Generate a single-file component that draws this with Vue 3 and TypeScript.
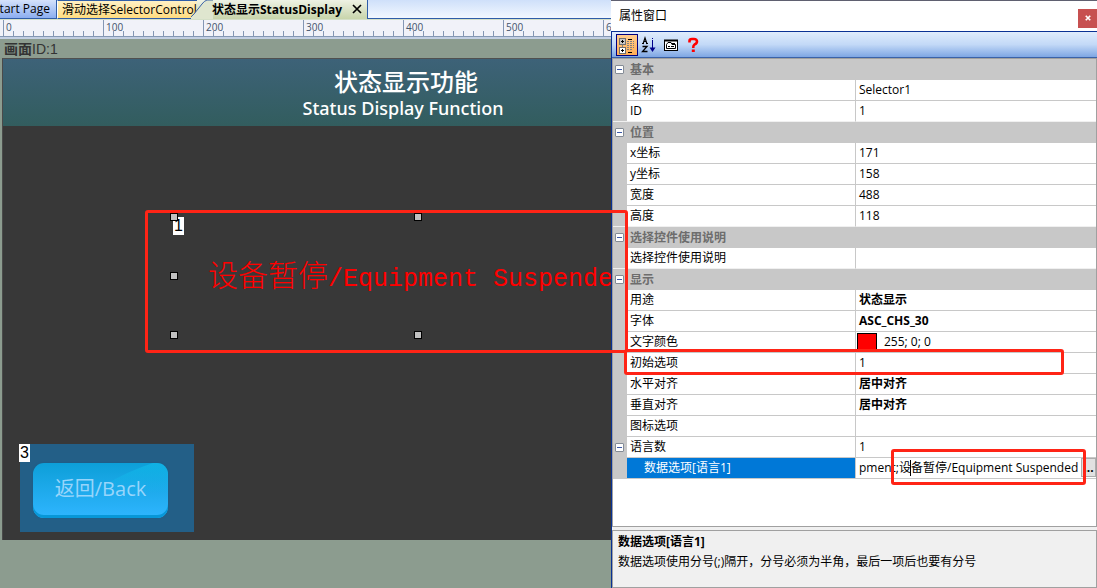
<script setup lang="ts">
import { ref } from 'vue'

interface Row {
  kind: 'category' | 'prop'
  label: string
  value?: string
  bold?: boolean
  swatch?: boolean
  toggle?: boolean
  editing?: boolean
  last?: boolean
}

const rows: Row[] = [
  { kind: 'category', label: '基本' },
  { kind: 'prop', label: '名称', value: 'Selector1' },
  { kind: 'prop', label: 'ID', value: '1', last: true },
  { kind: 'category', label: '位置' },
  { kind: 'prop', label: 'x坐标', value: '171' },
  { kind: 'prop', label: 'y坐标', value: '158' },
  { kind: 'prop', label: '宽度', value: '488' },
  { kind: 'prop', label: '高度', value: '118', last: true },
  { kind: 'category', label: '选择控件使用说明' },
  { kind: 'prop', label: '选择控件使用说明', value: '', last: true },
  { kind: 'category', label: '显示' },
  { kind: 'prop', label: '用途', value: '状态显示', bold: true },
  { kind: 'prop', label: '字体', value: 'ASC_CHS_30', bold: true },
  { kind: 'prop', label: '文字颜色', value: '255; 0; 0', swatch: true },
  { kind: 'prop', label: '初始选项', value: '1' },
  { kind: 'prop', label: '水平对齐', value: '居中对齐', bold: true },
  { kind: 'prop', label: '垂直对齐', value: '居中对齐', bold: true },
  { kind: 'prop', label: '图标选项', value: '' },
  { kind: 'prop', label: '语言数', value: '1', toggle: true },
  { kind: 'prop', label: '数据选项[语言1]', editing: true },
]

const options = ref('pment;设备暂停/Equipment Suspended')
const marks = [0, 100, 200, 300, 400, 500, 600]
const handles = ['nw', 'n', 'w', 'sw', 's']
</script>

<template>
  <div class="app">
    <main class="editor">
      <nav class="tabs">
        <button class="tab start" type="button"><span>Start Page</span></button>
        <button class="tab selector" type="button">滑动选择SelectorControl</button>
        <div class="tab active">
          <svg class="slant" viewBox="0 0 22 20" width="22" height="20" aria-hidden="true">
            <path d="M22 0H16Q13 1 11 4L3 14Q0 18 -4 19V20H22Z" fill="#dfe6cf" />
            <path d="M22 0H16Q13 1 11 4L3 14Q0 18 -4 18.500" fill="none" stroke="#3a62a8" />
          </svg>
          <button class="name" type="button">状态显示StatusDisplay</button>
          <button class="tab-close" type="button" aria-label="关闭标签">
            <svg viewBox="0 0 10 10" width="10" height="10"><path d="M1 1L9 9M9 1L1 9" stroke="#000" stroke-width="1.700" /></svg>
          </button>
        </div>
      </nav>
      <div class="ruler">
        <div v-for="m in marks" :key="m" class="mark">{{ m }}</div>
      </div>
      <section class="workspace">
        <div class="screen-id"><b>画面</b>ID:1</div>
        <div class="screen">
          <header class="banner">
            <h1>状态显示功能</h1>
            <p>Status Display Function</p>
          </header>
          <div class="control">
            <span class="badge">1</span>
            <span class="status"><span class="cjk">设备暂停</span>/Equipment Suspended</span>
            <i v-for="h in handles" :key="h" class="handle" :class="h"></i>
          </div>
          <div class="back-area">
            <span class="badge">3</span>
            <button class="back" type="button">
              <svg class="gloss" viewBox="0 0 135 52" preserveAspectRatio="none" aria-hidden="true">
                <path d="M70 23Q95 8 120 0H135V52H60Z" fill="url(#shine)" />
                <defs>
                  <linearGradient id="shine" x1="0" y1="0" x2="0" y2="1">
                    <stop offset="0" stop-color="#12c4f0" stop-opacity=".5" />
                    <stop offset="0.600" stop-color="#12c4f0" stop-opacity="0" />
                  </linearGradient>
                </defs>
              </svg>
              <span>返回/Back</span>
            </button>
          </div>
        </div>
      </section>
    </main>

    <aside class="panel">
      <div class="panel-title">
        <h2>属性窗口</h2>
        <button class="close" type="button" aria-label="关闭">
          <svg viewBox="0 0 8 8" width="6" height="6"><path d="M1 1L7 7M7 1L1 7" stroke="#fff" stroke-width="2.200" /></svg>
        </button>
      </div>
      <div class="panel-body">
        <div class="toolbar">
          <button class="tool on" type="button" aria-label="按分类顺序">
            <svg viewBox="0 0 16 17" width="16" height="17" shape-rendering="crispEdges">
              <path d="M3.500 7V10" stroke="#808080" fill="none" />
              <rect x=".5" y="1.500" width="6" height="6" fill="#c8c8c8" stroke="#707070" />
              <path d="M2 4.500H5M3.500 3V6" stroke="#000" />
              <rect x=".5" y="10.500" width="6" height="6" fill="#fff" stroke="#707070" />
              <path d="M2 13.500H5M3.500 12V15" stroke="#000" />
              <path d="M9 2.500H13M9 15.500H13" stroke="#000" />
              <path d="M8 4.500H10M11 4.500H13M14 4.500H15M8 6.500H10M11 6.500H13M14 6.500H15M8 8.500H10M11 8.500H13M14 8.500H15M8 10.500H10M11 10.500H13M14 10.500H15M8 12.500H10M11 12.500H13" stroke="#808080" />
            </svg>
          </button>
          <button class="tool" type="button" aria-label="按字母顺序">
            <svg viewBox="0 0 16 16" width="16" height="16">
              <path d="M2 7L4 1L6 7M2.500 4.500H5.500M1 6.500H3M5 6.500H7" fill="none" stroke="#000" stroke-width="1.200" />
              <path d="M1.500 9.500H6L1.500 14.500H6.500" fill="none" stroke="#000" stroke-width="1.300" />
              <path d="M11.500 1V2M11.500 3V11" stroke="#00008b" />
              <path d="M8.500 10.500H14.500L11.500 15Z" fill="#00008b" />
            </svg>
          </button>
          <button class="tool" type="button" aria-label="属性页">
            <svg viewBox="0 0 16 16" width="16" height="16">
              <rect x="1.500" y="3.500" width="13" height="10" fill="#fff" stroke="#000" />
              <path d="M1 3.500H15" stroke="#000" stroke-width="2" />
              <path d="M3.500 11.500V7.500L5 5.500H8L9 7.500H12.500V11.500Z" fill="#fff" stroke="#000" />
              <path d="M5 9.500H7M8 9.500H11M9 6.500H12" stroke="#000" />
            </svg>
          </button>
          <button class="tool" type="button" aria-label="帮助">
            <svg viewBox="0 0 16 16" width="16" height="16">
              <path d="M4.500 5.500V4Q4.500 2 7 2H9Q12 2 12 4.500Q12 6.500 9.500 7.500Q8.200 8.300 8.200 11" fill="none" stroke="#f00" stroke-width="2.600" />
              <rect x="6.800" y="12.500" width="3" height="2.500" fill="#f00" />
            </svg>
          </button>
        </div>
        <div class="grid">
          <table>
            <colgroup><col class="c-gutter" /><col class="c-name" /><col /></colgroup>
            <tbody>
              <tr v-for="(r, i) in rows" :key="i" :class="[r.kind, { last: r.last, selected: r.editing }]">
                <td class="gutter">
                  <button v-if="r.kind === 'category' || r.toggle" class="toggle" type="button" :aria-label="'折叠 ' + r.label"></button>
                </td>
                <th v-if="r.kind === 'category'" colspan="2" scope="rowgroup">{{ r.label }}</th>
                <template v-else>
                  <th scope="row">
                    <label v-if="r.editing" for="options">{{ r.label }}</label>
                    <template v-else>{{ r.label }}</template>
                  </th>
                  <td class="value" :class="{ bold: r.bold }">
                    <div v-if="r.editing" class="edit">
                      <input id="options" v-model="options" type="text" />
                      <i class="caret"></i>
                      <button type="button" aria-label="编辑选项">...</button>
                    </div>
                    <div v-else-if="r.swatch" class="color"><i class="swatch"></i>{{ r.value }}</div>
                    <template v-else>{{ r.value }}</template>
                  </td>
                </template>
              </tr>
            </tbody>
          </table>
        </div>
        <div class="help">
          <h3>数据选项[语言1]</h3>
          <p>数据选项使用分号(;)隔开，分号必须为半角，最后一项后也要有分号</p>
        </div>
      </div>
    </aside>

    <div class="callout control-callout"></div>
    <div class="callout initial-callout"></div>
    <div class="callout data-callout"></div>
  </div>
</template>

<style>
body {
  margin: 0;
}
</style>

<style scoped>
* {
  box-sizing: border-box;
}
.app {
  position: relative;
  display: flex;
  min-height: 100vh;
  overflow: hidden;
  font: 12px/20px "Open Sans", "Noto Sans CJK SC", sans-serif;
  color: #000;
}
button {
  padding: 0;
  border: 0;
  background: none;
  font: inherit;
  color: inherit;
}
h1, h2, h3, p {
  margin: 0;
  font-weight: 400;
}
.editor {
  flex: 1;
  min-width: 0;
  display: flex;
  flex-direction: column;
  overflow: hidden;
}
.tabs {
  display: flex;
  height: 20px;
  overflow: hidden;
  background: linear-gradient(#cfe0fa, #f4f9ff);
  border-bottom: 1px solid #d5e0c8;
  box-shadow: inset 0 -1px #2f5da8;
}
.tab {
  height: 19px;
  line-height: 17px;
  white-space: nowrap;
  flex: none;
}
.start {
  display: flex;
  justify-content: flex-end;
  width: 57px;
  padding-right: 6px;
  overflow: hidden;
  background: linear-gradient(#d5e2fb, #8caef0);
  border-right: 1px solid #2f5da8;
  border-bottom: 1px solid #2f5da8;
}
.selector {
  width: 140px;
  padding-left: 4px;
  overflow: hidden;
  text-align: left;
  border-left: 1px solid #fff;
  border-top: 1px solid #2f5da8;
  border-bottom: 1px solid #2f5da8;
  background: linear-gradient(#fff0c4, #ffdc80);
}
.active {
  position: relative;
  display: flex;
  align-items: center;
  gap: 10px;
  height: 20px;
  padding: 0 5px 2px 15px;
  background: linear-gradient(#eef2e4, #c6d3a8);
  border-right: 1px solid #2f5da8;
  font-weight: 700;
}
.slant {
  position: absolute;
  left: -6px;
  top: 0;
}
.name {
  position: relative;
}
.tab-close {
  display: flex;
}
.ruler {
  display: flex;
  height: 19px;
  padding-left: 3px;
  overflow: hidden;
  background: #f1f2f9;
  border-bottom: 2px solid #c3cfe2;
  box-shadow: inset 0 -1px #8497b4;
}
.mark {
  flex: none;
  width: 100px;
  height: 17px;
  padding-left: 2px;
  border-left: 1px solid #8497b4;
  font-size: 10px;
  line-height: 14px;
  color: #44546c;
  background: repeating-linear-gradient(90deg, transparent 0 9px, #8497b4 9px 10px) left bottom / 98px 6px no-repeat;
}
.workspace {
  flex: 1;
  padding-left: 2px;
  background: #8c9c8f;
}
.screen-id {
  height: 19px;
  padding-left: 2px;
  font: 14px/20px "Liberation Sans", "Noto Sans CJK SC", sans-serif;
  color: #333;
}
.screen {
  position: relative;
  height: 482px;
  border-left: 1px solid #4a4a4a;
  border-top: 1px solid #505050;
  background: #383838;
}
.banner {
  width: 800px;
  height: 67px;
  padding-top: 8px;
  text-align: center;
  color: #fff;
  background: linear-gradient(#3d6278, #325d5e);
}
.banner h1 {
  padding-left: 6px;
  font: 500 24px/28px "Noto Sans CJK SC", sans-serif;
}
.banner p {
  font: 500 18px/26px "Noto Sans", "Open Sans", sans-serif;
}
.control {
  position: absolute;
  left: 171px;
  top: 158px;
  display: flex;
  align-items: center;
  justify-content: center;
  width: 488px;
  height: 118px;
}
.badge {
  position: absolute;
  left: -1px;
  top: 0;
  width: 11px;
  background: #fff;
  font: 16px/18px "Liberation Sans", sans-serif;
  text-align: center;
  color: #000;
}
.status {
  font: 25px/36px "Liberation Mono", monospace;
  color: #f00;
  white-space: nowrap;
}
.cjk {
  font: 300 30px/36px "Noto Sans CJK SC", sans-serif;
}
.handle {
  position: absolute;
  width: 8px;
  height: 8px;
  border: 1px solid #000;
  background: #c0c0c0;
}
.nw, .w, .sw {
  left: -4px;
}
.n, .s {
  left: 240px;
}
.nw, .n {
  top: -4px;
}
.w {
  top: 55px;
}
.sw, .s {
  top: 114px;
}
.back-area {
  position: absolute;
  left: 17px;
  top: 385px;
  width: 174px;
  height: 88px;
  padding: 19px 26px 14px 13px;
  background: #235f87;
}
.back {
  position: relative;
  width: 100%;
  height: 55px;
  padding-bottom: 3px;
  overflow: hidden;
  border-radius: 11px;
  background: linear-gradient(#0d9fd8, #2fb5ff);
  box-shadow: inset 0 -3px #0797d8, 0 0 2px #1b5a84;
  font-size: 20px;
  line-height: 30px;
  color: #97d5fb;
}
.gloss {
  position: absolute;
  inset: 0;
  width: 100%;
  height: 52px;
}
.back span {
  position: relative;
}
.panel {
  flex: 0 0 486px;
  display: flex;
  flex-direction: column;
  background: #fff;
  border-top: 1px solid #5f6070;
}
.panel-title {
  display: flex;
  align-items: center;
  justify-content: space-between;
  height: 30px;
  padding-left: 8px;
}
.panel-title h2 {
  font-size: 12px;
}
.close {
  display: flex;
  align-items: center;
  justify-content: center;
  width: 19px;
  height: 19px;
  margin-top: 4px;
  background: #c75050;
}
.panel-body {
  flex: 1;
  display: flex;
  flex-direction: column;
  border-left: 1px solid #0a3294;
  border-top: 1px solid #0a3294;
  background: #f0f0f0;
}
.toolbar {
  display: flex;
  height: 26px;
  padding: 2px 4px;
  background: linear-gradient(#dfecfd, #c3d9f7 50%, #7ea6e3);
  border-bottom: 1px solid #3a62a8;
}
.tool {
  display: flex;
  align-items: center;
  justify-content: center;
  width: 22px;
  height: 22px;
}
.tool svg {
  overflow: visible;
}
.on {
  border: 1px solid #000080;
  background: linear-gradient(#ffcd8e, #ffad55);
}
.grid {
  height: 469px;
  border: 1px solid #a0a0a0;
  background: #fff;
}
table {
  width: 100%;
  table-layout: fixed;
  border-collapse: separate;
  border-spacing: 0;
}
.c-gutter {
  width: 14px;
}
.c-name {
  width: 229px;
}
tr {
  height: 21px;
}
td, th {
  height: 21px;
  padding: 0;
  line-height: 20px;
  font-weight: 400;
  text-align: left;
  white-space: nowrap;
  overflow: hidden;
}
th {
  padding-left: 3px;
}
.gutter {
  background: #c8c8c8;
}
.prop th, .value {
  border-bottom: 1px solid #c8c8c8;
}
.prop th {
  border-right: 1px solid #c8c8c8;
}
.last td, .last th {
  border-bottom: 1px solid #f0f0f0;
}
.category th {
  background: #c8c8c8;
  color: #6d6d6d;
  font-weight: 700;
}
.value {
  padding-left: 3px;
}
.bold {
  font-weight: 700;
}
.toggle {
  display: block;
  width: 9px;
  height: 9px;
  margin-left: 2px;
  border: 1px solid #848c96;
  border-radius: 1px;
  background: linear-gradient(#3c5aa8, #3c5aa8) center / 5px 1px no-repeat #fff;
}
.selected th {
  padding-left: 17px;
  background: #0078d7;
  color: #fff;
}
.color {
  display: flex;
  align-items: center;
  gap: 7px;
}
.swatch {
  width: 20px;
  height: 18px;
  margin-left: -2px;
  border: 1px solid #000;
  background: #f00;
}
.edit {
  position: relative;
  display: flex;
  height: 20px;
}
.edit input {
  flex: 1;
  min-width: 0;
  padding: 0;
  border: 0;
  outline: 0;
  background: none;
  font: inherit;
  color: inherit;
}
.caret {
  position: absolute;
  left: 51px;
  top: 2px;
  width: 1px;
  height: 16px;
  background: #000;
}
.edit button {
  width: 15px;
  height: 19px;
  border: 1px solid #adadad;
  background: #e1e1e1;
  font-weight: 700;
  line-height: 17px;
}
.help {
  flex: 1;
  margin-top: 3px;
  padding: 1px 5px;
  border: 1px solid #a0a0a0;
}
.help h3 {
  font-size: 12px;
  font-weight: 700;
}
.callout {
  position: absolute;
  border: 3px solid #ff2416;
  border-radius: 3px;
  pointer-events: none;
}
.control-callout {
  left: 145px;
  right: 469px;
  top: 210px;
  height: 143px;
}
.initial-callout {
  width: 440px;
  right: 33px;
  top: 349px;
  height: 26px;
}
.data-callout {
  width: 195px;
  right: 11px;
  top: 449px;
  height: 36px;
}
</style>
